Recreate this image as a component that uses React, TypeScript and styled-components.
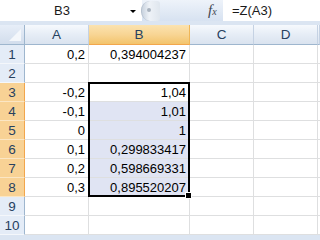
import React from "react";
import styled, { createGlobalStyle, css } from "styled-components";

const Global = createGlobalStyle`
  html, body { margin: 0; padding: 0; }
  body { width: 320px; height: 240px; overflow: hidden; background: #ffffff; font-family: "Liberation Sans", Arial, sans-serif; }
`;

const Page = styled.div`
  width: 320px;
  height: 240px;
  overflow: hidden;
  display: flex;
  flex-direction: column;
  background: #dbe5f2;
`;

const FormulaBar = styled.div`
  display: flex;
  height: 21px;
  flex: none;
  margin-bottom: 4px;
`;

const NameBox = styled.div`
  width: 142px;
  background: #ffffff;
  position: relative;
  font-size: 13px;
  color: #1a1a1a;
`;

const NameText = styled.span`
  position: absolute;
  left: 54px;
  top: 3px;
`;

const DropArrow = styled.span`
  position: absolute;
  left: 130px;
  top: 10px;
  width: 0;
  height: 0;
  border-left: 3px solid transparent;
  border-right: 3px solid transparent;
  border-top: 3px solid #000;
`;

const Middle = styled.div`
  width: 81px;
  background: linear-gradient(#eef3fa, #d7e2f1);
  position: relative;
`;

const Knob = styled.div`
  position: absolute;
  left: -1px;
  top: 1px;
  width: 18px;
  height: 20px;
  border-radius: 9px 3px 3px 9px;
  background: linear-gradient(90deg, #c9d3df, #eef2f7 40%, #dfe6ee);
  border-left: 1px solid #b7c2cf;
`;

const Dot = styled.span`
  position: absolute;
  left: 5px;
  top: 7px;
  width: 4px;
  height: 4px;
  border-radius: 50%;
  background: #a9b3bf;
`;

const Fx = styled.span`
  position: absolute;
  left: 66px;
  top: 2px;
  font-family: "Liberation Serif", serif;
  font-style: italic;
  font-size: 15px;
  color: #3f4752;
`;

const FxSub = styled.span`
  font-size: 10px;
`;

const FormulaInput = styled.div`
  flex: 1;
  background: #ffffff;
  font-size: 13px;
  color: #1a1a1a;
  padding: 3px 0 0 9px;
  box-sizing: border-box;
`;

const Grid = styled.div`
  display: grid;
  grid-template-columns: 25px 64px 101px 64px 64px 2px;
  grid-template-rows: 20px repeat(10, 19px);
  background: #ffffff;
`;

type Pos = { $r: number; $c: number };

const place = css<Pos>`
  grid-row: ${(p) => p.$r};
  grid-column: ${(p) => p.$c};
`;

const headerBase = css`
  box-sizing: border-box;
  border-right: 1px solid #9eb6ce;
  border-bottom: 1px solid #9eb6ce;
  color: #27415f;
  font-size: 13.5px;
  display: flex;
  align-items: center;
  justify-content: center;
`;

const ColHeader = styled.div<Pos & { $on?: boolean }>`
  ${place}
  ${headerBase}
  background: ${(p) =>
    p.$on
      ? "linear-gradient(#fbe3b0, #f8d594 50%, #f3c46c)"
      : "linear-gradient(#f6f9fd, #e6edf6 50%, #dae3ef)"};
  border-right-color: ${(p) => (p.$on ? "#f0b657" : "#c5d2e3")};
  border-bottom-color: ${(p) => (p.$on ? "#f2a64c" : "#9eb6ce")};
`;

const Corner = styled.div<Pos>`
  ${place}
  ${headerBase}
  background: linear-gradient(#e7eef8, #d2ddec);
  position: relative;
`;

const CornerTri = styled.span`
  position: absolute;
  right: 3px;
  bottom: 3px;
  width: 0;
  height: 0;
  border-left: 12px solid transparent;
  border-bottom: 12px solid #f4f7fb;
`;

const RowHeader = styled.div<Pos & { $on?: boolean }>`
  ${place}
  ${headerBase}
  background: ${(p) => (p.$on ? "#f8d295" : "#e4ecf7")};
  border-right-color: ${(p) => (p.$on ? "#f2a64c" : "#9eb6ce")};
  border-bottom-color: ${(p) => (p.$on ? "#fbe6c4" : "#f4f7fb")};
`;

const Cell = styled.div<Pos & { $sel?: boolean }>`
  ${place}
  box-sizing: border-box;
  border-right: 1px solid #dedfe0;
  border-bottom: 1px solid #dedfe0;
  background: ${(p) => (p.$sel ? "#e0e4f3" : "#ffffff")};
  font-size: 13px;
  color: #000;
  display: flex;
  align-items: center;
  justify-content: flex-end;
  padding: 1px 3px 0 0;
  white-space: nowrap;
  overflow: hidden;
`;

const Selection = styled.div`
  grid-column: 3;
  grid-row: 4 / 10;
  margin: -1px 0 0 -1px;
  border: 2px solid #000;
  pointer-events: none;
  position: relative;
`;

const Handle = styled.span`
  position: absolute;
  right: -4px;
  bottom: -4px;
  width: 5px;
  height: 5px;
  background: #000;
  border: 1px solid #fff;
`;

const cols = ["A", "B", "C", "D", ""];
const data: Record<number, [string, string]> = {
  1: ["0,2", "0,394004237"],
  3: ["-0,2", "1,04"],
  4: ["-0,1", "1,01"],
  5: ["0", "1"],
  6: ["0,1", "0,299833417"],
  7: ["0,2", "0,598669331"],
  8: ["0,3", "0,895520207"],
};

export default function App() {
  const rows = Array.from({ length: 10 }, (_, i) => i + 1);
  return (
    <Page>
      <Global />
      <FormulaBar>
        <NameBox>
          <NameText>B3</NameText>
          <DropArrow />
        </NameBox>
        <Middle>
          <Knob>
            <Dot />
          </Knob>
          <Fx>
            f<FxSub>x</FxSub>
          </Fx>
        </Middle>
        <FormulaInput>=Z(A3)</FormulaInput>
      </FormulaBar>
      <Grid>
        <Corner $r={1} $c={1}>
          <CornerTri />
        </Corner>
        {cols.map((c, i) => (
          <ColHeader key={i} $r={1} $c={i + 2} $on={c === "B"}>
            {c}
          </ColHeader>
        ))}
        {rows.map((r) => {
          const d = data[r];
          const gr = r + 1;
          return (
            <React.Fragment key={r}>
              <RowHeader $r={gr} $c={1} $on={r >= 3 && r <= 8}>
                {r}
              </RowHeader>
              <Cell $r={gr} $c={2}>{d ? d[0] : ""}</Cell>
              <Cell $r={gr} $c={3} $sel={r >= 4 && r <= 8}>
                {d ? d[1] : ""}
              </Cell>
              <Cell $r={gr} $c={4} />
              <Cell $r={gr} $c={5} />
              <Cell $r={gr} $c={6} />
            </React.Fragment>
          );
        })}
        <Selection>
          <Handle />
        </Selection>
      </Grid>
    </Page>
  );
}
